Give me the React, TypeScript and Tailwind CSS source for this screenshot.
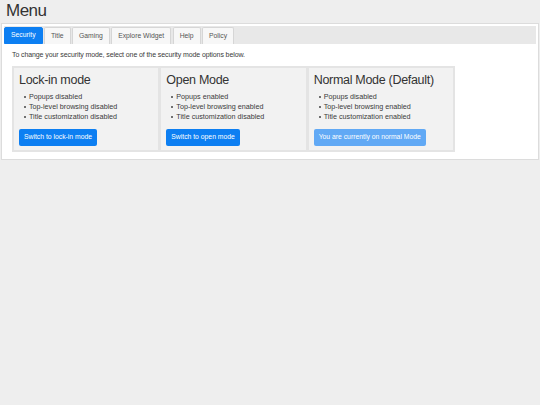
import React from "react";

const modes = [
	{
		id: "lock",
		title: "Lock-in mode",
		items: ["Popups disabled", "Top-level browsing disabled", "Title customization disabled"],
		button: "Switch to lock-in mode",
		current: false,
	},
	{
		id: "open",
		title: "Open Mode",
		items: ["Popups enabled", "Top-level browsing enabled", "Title customization disabled"],
		button: "Switch to open mode",
		current: false,
	},
	{
		id: "normal",
		title: "Normal Mode (Default)",
		items: ["Popups disabled", "Top-level browsing enabled", "Title customization enabled"],
		button: "You are currently on normal Mode",
		current: true,
	},
];

const tabs = ["Security", "Title", "Gaming", "Explore Widget", "Help", "Policy"];

export default function App() {
	return (
		<div className="min-h-[405px] bg-[#eeeeee] font-['Liberation_Sans',Arial,sans-serif] text-[#333]">
			<h1 className="px-[6px] text-[17px] tracking-[-0.5px] leading-[21px] h-[23px] text-[#333]">Menu</h1>

			{/* Panel */}
			<div className="mx-[1px] bg-white border border-[#dcdcdc] pt-[2px] pb-[7px] px-[2px]">
				{/* Tabs */}
				<div className="flex gap-[1.4px] bg-[#e8e8e8] pt-[1px] h-[18px]">
					{tabs.map((t, i) => (
						<div
							key={t}
							className={
								i === 0
									? "h-[17px] px-[6px] flex items-center text-[6.8px] text-white bg-[#0d7ff2] rounded-t-[2px] border border-[#0d7ff2]"
									: "h-[17px] px-[6px] flex items-center text-[6.8px] text-[#555] bg-[#f7f7f7] rounded-t-[2px] border border-b-0 border-[#d6d6d6]"
							}
						>
							{t}
						</div>
					))}
				</div>

				<p className="px-[8px] pt-[6px] text-[7px] tracking-[-0.1px] leading-[10px] text-[#3a3a3a]">
					To change your security mode, select one of the security mode options below.
				</p>

				{/* Mode cards */}
				<div className="ml-[8px] mt-[6px] w-[443px] bg-[#e4e4e4] p-[2px] flex gap-[3px]">
					{modes.map((m) => (
						<div key={m.id} className="flex-1 bg-[#f2f2f2] px-[5px] pt-[5px] pb-[4px]">
							<h2 className="text-[12.5px] tracking-[-0.3px] leading-[15px] text-[#333] whitespace-nowrap">
								{m.title}
							</h2>
							<ul className="mt-[4px] text-[7.2px] leading-[10px] text-[#3a3a3a]">
								{m.items.map((it) => (
									<li key={it} className="flex items-center">
										<span className="ml-[5px] mr-[3px] w-[2px] h-[2px] rounded-full bg-[#444]" />
										{it}
									</li>
								))}
							</ul>
							<button
								className={
									m.current
										? "mt-[5px] h-[17px] px-[5px] rounded-[2px] text-[6.8px] text-white bg-[#61a9f5]"
										: "mt-[5px] h-[17px] px-[5px] rounded-[2px] text-[6.8px] text-white bg-[#0d7ff2]"
								}
							>
								{m.button}
							</button>
						</div>
					))}
				</div>
			</div>
		</div>
	);
}
